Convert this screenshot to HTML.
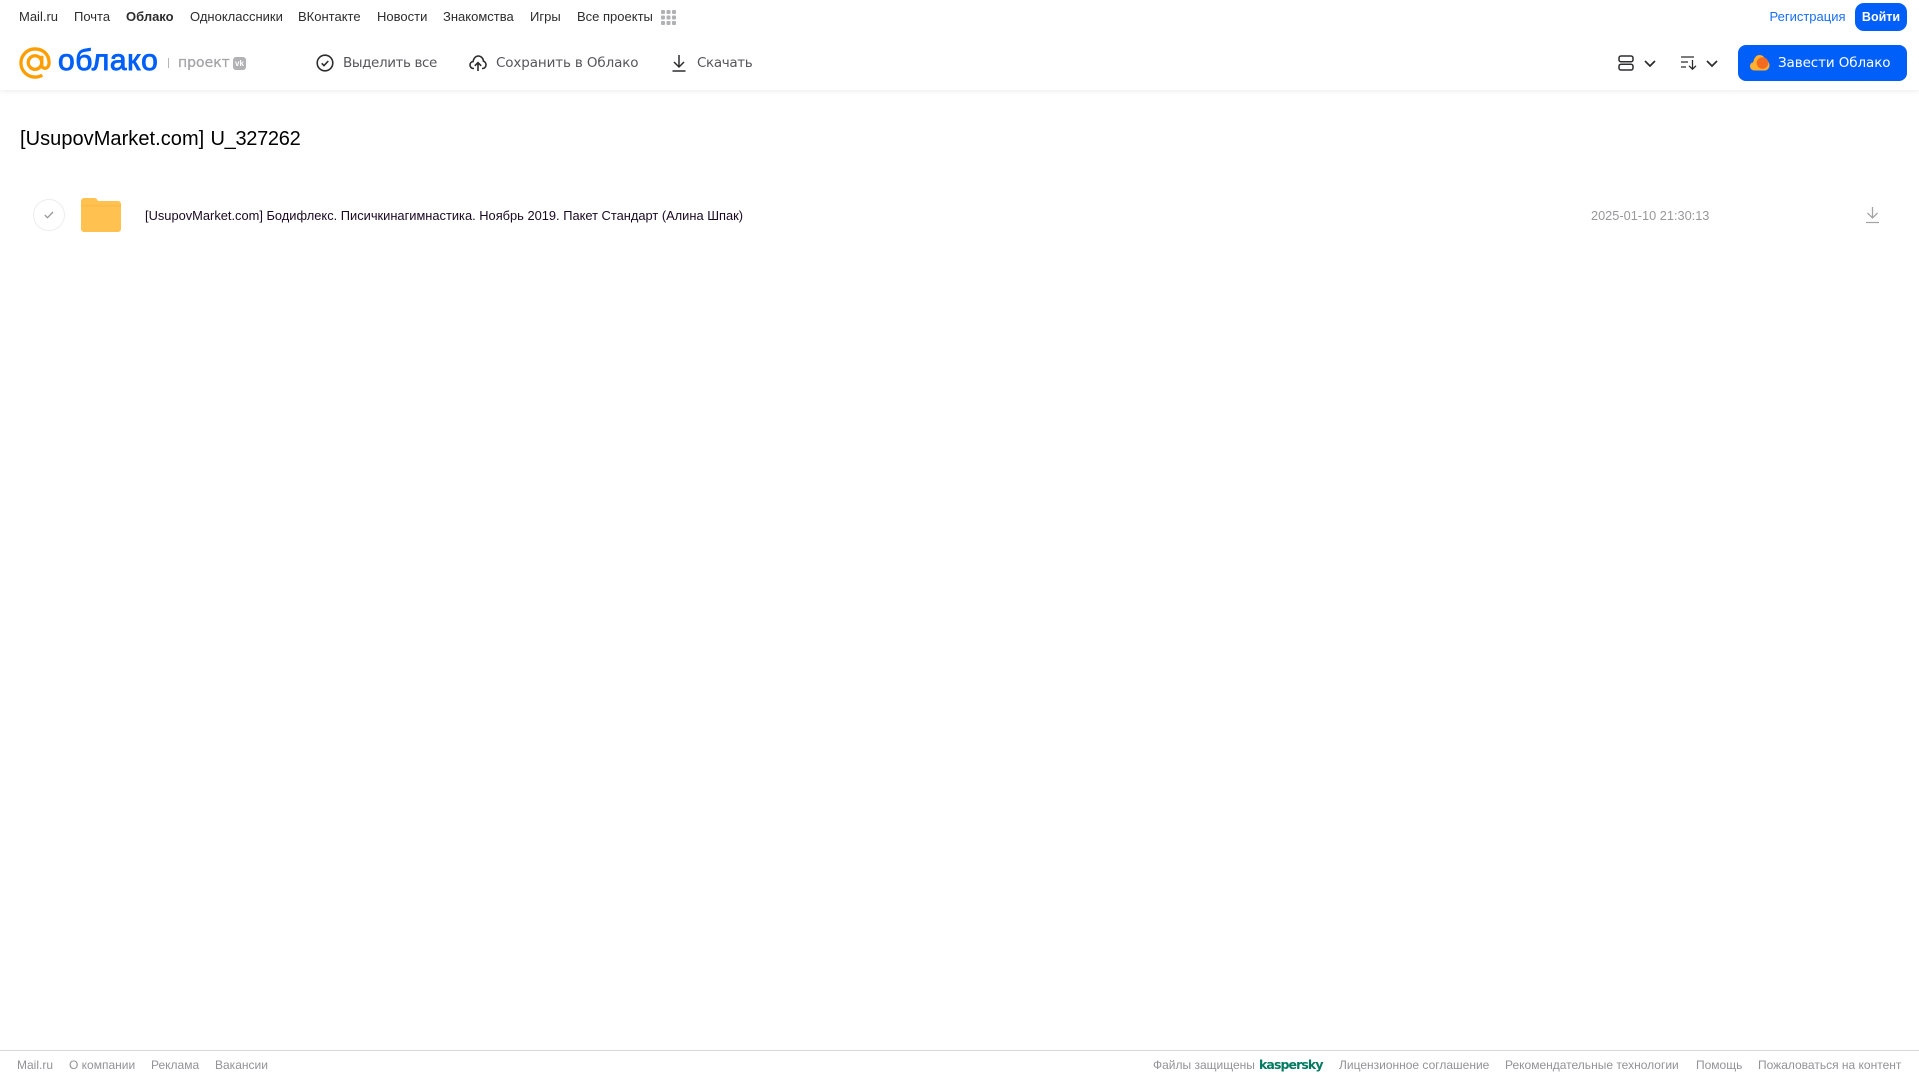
<!DOCTYPE html>
<html lang="ru"><head><meta charset="utf-8"><title>Облако</title>
<style>
html,body{margin:0;padding:0;background:#fff}
body{width:1919px;height:1079px;position:relative;overflow:hidden;font-family:"Liberation Sans",sans-serif}
.t{position:absolute;white-space:nowrap;line-height:20px}
.n{top:7px;font-size:13px;color:#2c2d2e}
.b{top:53px;color:#55565a;font-family:"DejaVu Sans",sans-serif;font-size:13.5px}
.f{top:1055px;font-size:12px;color:#929396}
svg{position:absolute;overflow:visible}
</style></head><body>
<div style="position:absolute;left:0;top:0;width:1919px;height:90px;background:#fff;box-shadow:0 1px 6px rgba(0,0,0,.08)"></div>

<span class="t n" style="left:19px">Mail.ru</span>
<span class="t n" style="left:74px">Почта</span>
<span class="t n" style="left:126px;font-weight:bold">Облако</span>
<span class="t n" style="left:190px">Одноклассники</span>
<span class="t n" style="left:298px">ВКонтакте</span>
<span class="t n" style="left:377px">Новости</span>
<span class="t n" style="left:443px">Знакомства</span>
<span class="t n" style="left:530px">Игры</span>
<span class="t n" style="left:577px">Все проекты</span>
<svg style="left:661px;top:10px" width="15" height="15" fill="#b0b1b3"><rect width="4" height="4" rx="1"/><rect x="5.500" width="4" height="4" rx="1"/><rect x="11" width="4" height="4" rx="1"/><rect y="5.500" width="4" height="4" rx="1"/><rect x="5.500" y="5.500" width="4" height="4" rx="1"/><rect x="11" y="5.500" width="4" height="4" rx="1"/><rect y="11" width="4" height="4" rx="1"/><rect x="5.500" y="11" width="4" height="4" rx="1"/><rect x="11" y="11" width="4" height="4" rx="1"/></svg>

<span class="t" style="left:1769.500px;top:7px;font-size:13px;color:#1a6ff5">Регистрация</span>
<div style="position:absolute;left:1855px;top:3px;width:52px;height:28px;border-radius:9px;background:#005ff9;color:#fff;font-size:12.500px;line-height:28px;text-align:center;font-weight:bold">Войти</div>

<svg style="left:19px;top:47px" width="32" height="32" viewBox="0 0 33 33" fill="none" stroke="#ff9e00" stroke-width="3.400"><circle cx="16.500" cy="16" r="7"/><path d="M23.500 9v9.500c0 5 7.500 5 7.500-2.500C31 7.500 24.500 2 16.500 2S2 8.500 2 16.500 8.500 31 16.500 31c3 0 5.500-.7 7.500-2"/></svg>
<span class="t" style="left:58px;top:42px;line-height:38px;font-size:30px;color:#005ff9;-webkit-text-stroke:.9px #005ff9;letter-spacing:.6px">облако</span>
<div style="position:absolute;left:168px;top:58px;width:1px;height:10px;background:#b5b6b8"></div>
<span class="t" style="left:178px;top:53px;font-size:14px;color:#a5a6a8;font-family:'DejaVu Sans',sans-serif;-webkit-text-stroke:.3px #a5a6a8">проект</span>
<div style="position:absolute;left:233px;top:57px;width:13px;height:13px;border-radius:3px;background:#b1b2b4;color:#fff;font-size:8px;line-height:13px;text-align:center;font-weight:bold">vk</div>

<svg style="left:316px;top:54px" width="18" height="18" fill="none" stroke="#2c2d2e" stroke-width="1.600"><circle cx="9" cy="9" r="7.800"/><path d="M5.700 9.300l2.300 2.300 4.300-4.600"/></svg>
<span class="t b" style="left:343px;letter-spacing:-.4px">Выделить все</span>
<svg style="left:469px;top:54px" width="18" height="18" fill="none" stroke="#2c2d2e" stroke-width="1.600"><path d="M5 14.500H4.500C2.500 14.500 1 13 1 11c0-1.800 1.300-3.200 3-3.400C4.500 4.500 6.500 2 9.300 2c2.800 0 5 2.300 5.200 5.200 1.500.4 2.500 2 2.500 3.700 0 2-1.500 3.600-3.500 3.600H13"/><path d="M9 17V9M5.800 11.800L9 8.600l3.200 3.200"/></svg>
<span class="t b" style="left:496px;letter-spacing:-.13px">Сохранить в Облако</span>
<svg style="left:672px;top:54px" width="15" height="18" fill="none" stroke="#2c2d2e" stroke-width="1.500"><path d="M7 1v11.500M2 8l5 5 5-5M.5 17h13"/></svg>
<span class="t b" style="left:697px;letter-spacing:-.37px">Скачать</span>

<svg style="left:1618px;top:55px" width="16" height="16" fill="none" stroke="#2c2d2e" stroke-width="1.500"><rect x="1" y="1" width="14" height="5.800" rx="2"/><rect x="1" y="9.200" width="14" height="5.800" rx="2"/></svg>
<svg style="left:1644px;top:60px" width="12" height="7" fill="none" stroke="#2c2d2e" stroke-width="1.700"><path d="M1 1l5 5 5-5"/></svg>
<svg style="left:1681px;top:56px" width="16" height="14" fill="none" stroke="#2c2d2e" stroke-width="1.300"><path d="M0 1h13M0 6h7M0 11h5M11.500 4v9M8 9.800l3.500 3.400 3.500-3.400"/></svg>
<svg style="left:1706px;top:60px" width="12" height="7" fill="none" stroke="#2c2d2e" stroke-width="1.700"><path d="M1 1l5 5 5-5"/></svg>

<div style="position:absolute;left:1738px;top:45px;width:169px;height:36px;border-radius:8px;background:#005ff9"></div>
<svg style="left:1750px;top:54px" width="20" height="17"><path d="M4.500 16.500C2 16.500 0 14.700 0 12.300c0-2 1.300-3.600 3.200-4C3.800 4 6.500 1 9.500 1c3 0 5.500 2.300 6 5.200 2.400.4 4 2.600 4 5 0 3-2.300 5.300-5 5.300z" fill="#ffb02e"/><circle cx="12.500" cy="9" r="5.800" fill="#f26b21"/></svg>
<span class="t" style="left:1778px;top:53px;font-size:13.500px;color:#fff;font-family:'DejaVu Sans',sans-serif;letter-spacing:-.1px">Завести Облако</span>

<span class="t" style="left:20px;top:128px;line-height:22px;font-size:20px;color:#000;letter-spacing:.05px">[UsupovMarket.com]</span>
<span class="t" style="left:210.500px;top:128px;line-height:22px;font-size:20px;color:#000;letter-spacing:-.3px">U_327262</span>

<div style="position:absolute;left:33px;top:199px;width:30px;height:30px;border:1px solid #eceded;border-radius:50%"></div>
<svg style="left:44px;top:211px" width="10" height="8" fill="none" stroke="#97989a" stroke-width="1.300"><path d="M.8 4l2.700 2.700L9 1"/></svg>
<svg style="left:81px;top:198px" width="40" height="34"><path d="M0 3a3 3 0 0 1 3-3h10c2 0 3 1 4 3h20a3 3 0 0 1 3 3v25a3 3 0 0 1-3 3H3a3 3 0 0 1-3-3z" fill="#ffc14f"/><path d="M0 7h40v1.500H0z" fill="#ffb947"/></svg>
<span class="t" style="left:145px;top:206px;font-size:12.860px;color:#1a0a24">[UsupovMarket.com] Бодифлекс. Писичкинагимнастика. Ноябрь 2019. Пакет Стандарт (Алина Шпак)</span>
<span class="t" style="left:1591px;top:206px;font-size:12.760px;color:#97989a">2025-01-10 21:30:13</span>
<svg style="left:1866px;top:206px" width="14" height="18" fill="none" stroke="#a3a4a6" stroke-width="1.300"><path d="M6.500 1v10.500M1.500 7l5 5 5-5M0 16.500h13"/></svg>

<div style="position:absolute;left:0;top:1050px;width:1919px;height:1px;background:#d6d7d9"></div>
<span class="t f" style="left:17px">Mail.ru</span>
<span class="t f" style="left:69px">О компании</span>
<span class="t f" style="left:151px">Реклама</span>
<span class="t f" style="left:215px">Вакансии</span>
<span class="t f" style="left:1153px">Файлы защищены</span>
<span class="t f" style="left:1259px;top:1055px;color:#00795f;font-weight:bold;font-size:12.500px;font-family:'DejaVu Sans',sans-serif;letter-spacing:-.9px">kaspersky</span>
<span class="t f" style="left:1339px">Лицензионное соглашение</span>
<span class="t f" style="left:1505px">Рекомендательные технологии</span>
<span class="t f" style="left:1696px">Помощь</span>
<span class="t f" style="left:1758px">Пожаловаться на контент</span>
</body></html>
